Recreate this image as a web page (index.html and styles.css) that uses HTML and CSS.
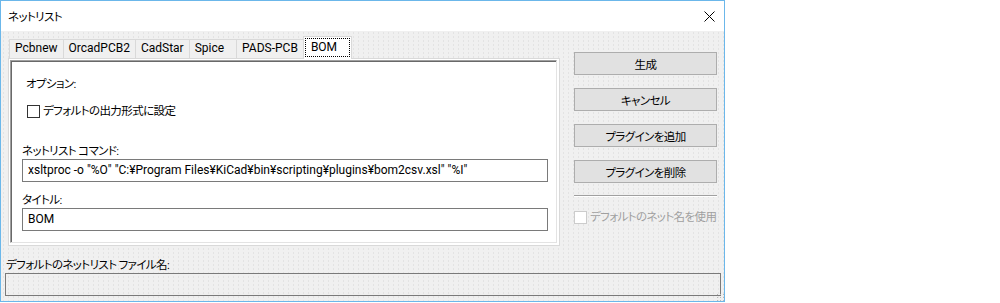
FILE: index.html
```html
<!DOCTYPE html>
<html lang="ja">
  <head>
    <meta charset="UTF-8" />
    <title>ネットリスト</title>
    <link rel="stylesheet" href="styles.css">
  </head>
  <body>
    <div class="window">
      <div class="title-bar">
        <span class="title">ネットリスト</span>
        <svg class="close" width="11" height="11" viewBox="0 0 11 11">
          <path d="M0.5 0.5 L10.5 10.5 M10.5 0.5 L0.5 10.5" stroke="#000" stroke-width="1" fill="none" />
        </svg>
      </div>

      <div class="dialog">
        <div class="main-row">
          <!-- notebook with one tab per netlist format -->
          <div class="notebook">
            <div class="tabs">
              <span class="tab">Pcbnew</span>
              <span class="tab">OrcadPCB2</span>
              <span class="tab">CadStar</span>
              <span class="tab tab-wide">Spice</span>
              <span class="tab">PADS-PCB</span>
              <span class="tab active"><span class="focus">BOM</span></span>
            </div>
            <div class="page">
              <div class="panel">
                <p class="options-label">オプション:</p>
                <label class="check">
                  <span class="box"></span>
                  デフォルトの出力形式に設定
                </label>

                <p class="field-label">ネットリスト コマンド:</p>
                <div class="text-input">xsltproc -o "%O" "C:¥Program Files¥KiCad¥bin¥scripting¥plugins¥bom2csv.xsl" "%I"</div>

                <p class="field-label title-label">タイトル:</p>
                <div class="text-input">BOM</div>
              </div>
            </div>
          </div>

          <div class="actions">
            <button class="btn">生成</button>
            <button class="btn">キャンセル</button>
            <button class="btn">プラグインを追加</button>
            <button class="btn">プラグインを削除</button>
            <div class="separator"></div>
            <label class="check disabled">
              <span class="box"></span>
              デフォルトのネット名を使用
            </label>
          </div>
        </div>

        <div class="file-row">
          <p class="field-label">デフォルトのネットリスト ファイル名:</p>
          <div class="text-input readonly"></div>
        </div>

        <div class="grip"></div>
      </div>
    </div>
  </body>
</html>
```

FILE: styles.css
```css
* {
  margin: 0;
  padding: 0;
  box-sizing: border-box;
  font-family: Roboto, "Noto Sans CJK JP", sans-serif;
  font-feature-settings: "palt";
}

body {
  background: #fff;
  font-size: 11.5px;
  letter-spacing: -0.6px;
  color: #000;
}

.window {
  width: 725px;
  height: 302px;
  border: 1px solid #6bb7ea;
  display: flex;
  flex-direction: column;
}

.title-bar {
  height: 30px;
  background: #fff;
  display: flex;
  justify-content: space-between;
  align-items: center;
  padding: 0 9px 0 7px;
}

.title {
  margin-top: -1px;
}

.dialog {
  flex: 1;
  position: relative;
  background-color: #f0f0f0;
  background-image: radial-gradient(circle, #e3e3e3 0.6px, transparent 0.9px);
  background-size: 5px 4px;
  padding: 5px 6px 0 4px;
}

.main-row {
  display: flex;
  padding-left: 3px;
}

/* Notebook */
.notebook {
  width: 552px;
}

.tabs {
  display: flex;
  align-items: flex-end;
  height: 22px;
  padding-left: 1px;
}

.tab {
  height: 19px;
  line-height: 17px;
  padding: 0 5px;
  border: 1px solid #d9d9d9;
  border-bottom: none;
  margin-right: -1px;
  background: #f0f0f0;
  white-space: nowrap;
  font-size: 12px;
  letter-spacing: 0;
}

.tab-wide {
  padding-right: 12px;
}

.tab.active {
  height: 23px;
  margin-bottom: -1px;
  background: #fff;
  padding: 1px 1px 0 1px;
  position: relative;
  z-index: 1;
}

.tab .focus {
  display: block;
  height: 19px;
  line-height: 16px;
  padding: 0 12px 0 5px;
  border: 1px dotted #000;
}

.page {
  height: 188px;
  border: 1px solid #d9d9d9;
  background: #fff;
  padding: 1px 2px 2px 1px;
}

.panel {
  height: 100%;
  border: 1px solid;
  border-color: #a0a0a0 #e3e3e3 #e3e3e3 #a0a0a0;
  box-shadow: inset 1px 1px 0 #696969;
  padding: 1px 8px 0 11px;
}

.options-label {
  margin: 14px 0 0 4px;
  line-height: 16px;
}

.check {
  display: flex;
  align-items: center;
  gap: 3px;
  margin: 11px 0 0 5px;
  line-height: 16px;
  white-space: nowrap;
}

.box {
  width: 13px;
  height: 13px;
  border: 1px solid #333;
  background: #fff;
}

.field-label {
  line-height: 16px;
}

.panel .field-label {
  margin-top: 24px;
}

.panel .title-label {
  margin-top: 10px;
}

.text-input {
  height: 23px;
  border: 1px solid #7a7a7a;
  background: #fff;
  padding-left: 5px;
  line-height: 21px;
  white-space: nowrap;
  overflow: hidden;
  font-size: 12px;
  letter-spacing: 0;
}

/* Button column */
.actions {
  width: 143px;
  margin-left: 14px;
  padding-top: 16px;
  display: flex;
  flex-direction: column;
  gap: 13px;
}

.btn {
  height: 23px;
  border: 1px solid #adadad;
  background: #e1e1e1;
  font-size: 11.5px;
  letter-spacing: -0.6px;
  color: #000;
}

.separator {
  height: 2px;
  border-top: 1px solid #a0a0a0;
  border-bottom: 1px solid #fff;
  margin-top: -1px;
}

.actions .check {
  margin: -1px 0 0 0;
}

.check.disabled {
  color: #a0a0a0;
}

.check.disabled .box {
  border-color: #cccccc;
}

/* Default file name */
.file-row {
  margin-top: 11px;
}

.file-row .field-label {
  margin-left: 1px;
}

.text-input.readonly {
  margin-top: 0;
  width: 716px;
  background: transparent;
}

.grip {
  position: absolute;
  right: 0;
  bottom: 0;
  width: 8px;
  height: 8px;
  background-image: radial-gradient(circle, #b8b8b8 0.8px, transparent 1px);
  background-size: 3px 3px;
}
```
